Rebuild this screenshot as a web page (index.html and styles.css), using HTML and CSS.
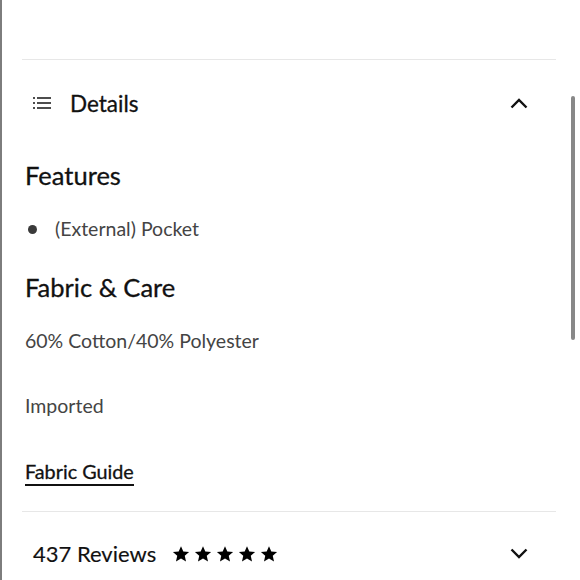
FILE: index.html
```html
<!DOCTYPE html>
<html>
<head>
<meta charset="utf-8">
<link rel="stylesheet" href="styles.css">
</head>
<body>
<div class="frame">
  <div class="panel">
    <div class="divider"></div>
    <div class="acc-head">
      <div class="acc-title">
        <svg class="list-icon" width="18" height="12" viewBox="0 0 18 12">
          <rect x="0" y="0.2" width="2" height="1.6" fill="#222"/>
          <rect x="0" y="5.2" width="2" height="1.6" fill="#222"/>
          <rect x="0" y="10.2" width="2" height="1.6" fill="#222"/>
          <rect x="4" y="0.2" width="14" height="1.6" fill="#222"/>
          <rect x="4" y="5.2" width="14" height="1.6" fill="#222"/>
          <rect x="4" y="10.2" width="14" height="1.6" fill="#222"/>
        </svg>
        <span class="medium">Details</span>
      </div>
      <svg class="chev" width="18" height="11" viewBox="0 0 18 11">
        <path d="M1.5 9.5 L9 2 L16.5 9.5" fill="none" stroke="#111" stroke-width="2.4"/>
      </svg>
    </div>
    <div class="acc-body">
      <h2 class="sec-title medium">Features</h2>
      <ul class="feat-list">
        <li><span class="dot"></span>(External) Pocket</li>
      </ul>
      <h2 class="sec-title medium">Fabric &amp; Care</h2>
      <p class="info">60% Cotton/40% Polyester</p>
      <p class="info">Imported</p>
      <a class="guide medium">Fabric Guide</a>
    </div>
    <div class="divider"></div>
    <div class="reviews">
      <div class="rev-left">
        <span class="rev-count">437 Reviews</span>
        <div class="stars">
          <svg viewBox="0 0 24 24"><path d="M12 1.5l3.1 7.1 7.7.7-5.8 5.1 1.7 7.6L12 18l-6.7 4 1.7-7.6-5.8-5.1 7.7-.7z"/></svg>
          <svg viewBox="0 0 24 24"><path d="M12 1.5l3.1 7.1 7.7.7-5.8 5.1 1.7 7.6L12 18l-6.7 4 1.7-7.6-5.8-5.1 7.7-.7z"/></svg>
          <svg viewBox="0 0 24 24"><path d="M12 1.5l3.1 7.1 7.7.7-5.8 5.1 1.7 7.6L12 18l-6.7 4 1.7-7.6-5.8-5.1 7.7-.7z"/></svg>
          <svg viewBox="0 0 24 24"><path d="M12 1.5l3.1 7.1 7.7.7-5.8 5.1 1.7 7.6L12 18l-6.7 4 1.7-7.6-5.8-5.1 7.7-.7z"/></svg>
          <svg viewBox="0 0 24 24"><path d="M12 1.5l3.1 7.1 7.7.7-5.8 5.1 1.7 7.6L12 18l-6.7 4 1.7-7.6-5.8-5.1 7.7-.7z"/></svg>
        </div>
      </div>
      <svg class="chev" width="18" height="11" viewBox="0 0 18 11">
        <path d="M1.5 1.5 L9 9 L16.5 1.5" fill="none" stroke="#111" stroke-width="2.4"/>
      </svg>
    </div>
  </div>
  <div class="scroll-thumb"></div>
</div>
</body>
</html>
```

FILE: styles.css
```css
html, body {
  margin: 0;
  padding: 0;
  background: #fff;
}
body {
  font-family: Lato, "Noto Sans", sans-serif;
  color: #111;
}
.frame {
  position: relative;
  height: 580px;
  overflow: hidden;
  border-left: 2px solid #7d7d7d;
  box-sizing: border-box;
}
.panel {
  margin: 0 24px 0 20px;
  padding-top: 59px;
}
.divider {
  height: 1px;
  background: #e7e7e7;
}
.medium {
  -webkit-text-stroke: 0.3px currentColor;
}
.acc-head {
  height: 86px;
  display: flex;
  align-items: center;
  justify-content: space-between;
  padding: 0 28px 0 11px;
}
.acc-title {
  display: flex;
  align-items: center;
  gap: 19px;
  font-size: 22.5px;
}
.list-icon { display: block; }
.chev { display: block; }
.acc-body {
  padding: 14px 0 0 3px;
}
.sec-title {
  margin: 0;
  font-size: 25.5px;
  font-weight: 400;
  line-height: 30px;
}
.feat-list {
  list-style: none;
  margin: 26px 0 30px;
  padding: 0;
}
.feat-list li {
  display: flex;
  align-items: center;
  font-size: 19.5px;
  color: #444;
  line-height: 26px;
}
.dot {
  width: 9px;
  height: 9px;
  border-radius: 50%;
  background: #3a3a3a;
  margin: 0 18px 0 3px;
}
.info {
  margin: 0;
  font-size: 19.5px;
  line-height: 26px;
  color: #444;
}
.sec-title + .info { margin-top: 26px; }
.info + .info { margin-top: 39px; }
.guide {
  display: inline-block;
  margin-top: 39px;
  margin-bottom: 25px;
  font-size: 19.8px;
  color: #111;
  line-height: 26px;
  border-bottom: 2px solid #111;
  vertical-align: top;
}
.reviews {
  height: 83px;
  display: flex;
  align-items: center;
  justify-content: space-between;
  padding: 0 28px 0 11px;
}
.rev-left {
  display: flex;
  align-items: center;
  gap: 16px;
}
.rev-count {
  font-size: 22px;
  -webkit-text-stroke: 0.15px currentColor;
}
.stars {
  display: flex;
  gap: 4px;
}
.stars svg {
  width: 18px;
  height: 18px;
  fill: #000;
}
.scroll-thumb {
  position: absolute;
  right: 5px;
  top: 96px;
  width: 4px;
  height: 244px;
  border-radius: 2px;
  background: #888;
}
```
